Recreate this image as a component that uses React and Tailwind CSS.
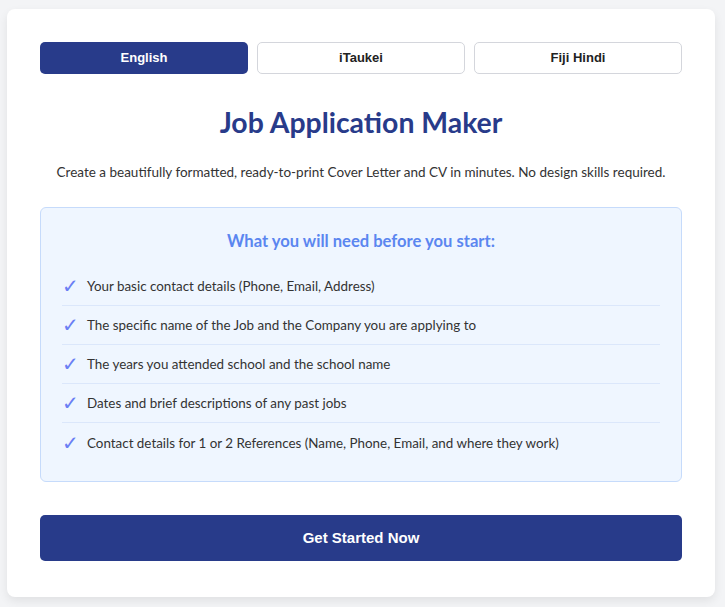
import React from "react";

const langs = ["English", "iTaukei", "Fiji Hindi"];

const needs = [
  "Your basic contact details (Phone, Email, Address)",
  "The specific name of the Job and the Company you are applying to",
  "The years you attended school and the school name",
  "Dates and brief descriptions of any past jobs",
  "Contact details for 1 or 2 References (Name, Phone, Email, and where they work)",
];

export default function App() {
  return (
    <div className="min-h-[607px] bg-[#f3f4f6] pt-[9px] pl-[7px]" style={{ fontFamily: "Lato, 'Noto Sans', sans-serif" }}>
      <div className="w-[708px] bg-white rounded-lg shadow-[0_4px_10px_rgba(0,0,0,0.08)] px-[33px] pt-[33px] pb-[36px]">
        <div className="grid grid-cols-3 gap-[9px]">
          {langs.map((l, i) => (
            <button
              key={l}
              className={
                "h-[32px] rounded-[5px] text-[13px] font-bold font-['Liberation_Sans',Arial,sans-serif] " +
                (i === 0 ? "bg-[#283b8a] text-white" : "bg-white text-[#222] border border-[#d4d6dc]")
              }
            >
              {l}
            </button>
          ))}
        </div>

        <h1 className="mt-[31px] text-center text-[28.4px] leading-[34px] font-bold text-[#283b8a]">
          Job Application Maker
        </h1>
        <p className="mt-[23px] text-center text-[13.5px] text-[#333]">
          Create a beautifully formatted, ready-to-print Cover Letter and CV in minutes. No design skills required.
        </p>

        <div className="mt-[25px] bg-[#eff6ff] border border-[#c6dbfb] rounded-[6px] px-[21px] pt-[21px] pb-[19px]">
          <h2 className="text-center text-[16.6px] font-bold text-[#5b86f0]">What you will need before you start:</h2>
          <ul className="mt-[13px]">
            {needs.map((n, i) => (
              <li
                key={i}
                className={"flex items-center h-[39px] text-[13.4px] text-[#333] " + (i < needs.length - 1 ? "border-b border-[#dbe7fb]" : "")}
              >
                <span className="w-[25px] text-[20px] font-bold text-[#6a7ef4] font-['DejaVu_Sans',sans-serif]">✓</span>
                {n}
              </li>
            ))}
          </ul>
        </div>

        <button className="mt-[33px] w-full h-[46px] rounded-[5px] bg-[#283b8a] text-white text-[15px] font-bold font-['Liberation_Sans',Arial,sans-serif]">
          Get Started Now
        </button>
      </div>
    </div>
  );
}
